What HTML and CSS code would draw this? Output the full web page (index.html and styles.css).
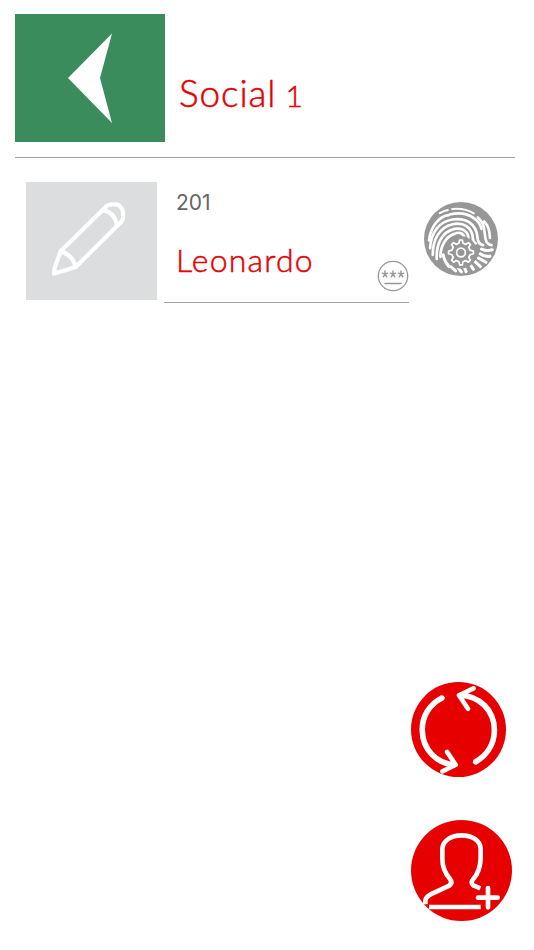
FILE: index.html
```html
<!DOCTYPE html>
<html lang="en">
<head>
    <meta charset="UTF-8">
    <meta name="viewport" content="width=device-width, initial-scale=1.0">
    <title>Social 1</title>
    <link rel="stylesheet" href="styles.css">
</head>
<body>
    <div class="page">
        <!-- Header -->
        <header class="header">
            <a href="#" class="back-btn" aria-label="Back">
                <svg viewBox="0 0 150 128"><path d="M53 64 97 19.500 85 64 97 109Z" fill="#fff"/></svg>
            </a>
            <h1 class="title">Social <span class="title-number">1</span></h1>
        </header>

        <!-- User row -->
        <section class="user-row">
            <a href="#" class="edit-btn" aria-label="Edit">
                <svg viewBox="0 0 393 351" fill="none" stroke="#fff" stroke-width="12.500" stroke-linejoin="round" stroke-linecap="round">
                    <path d="M104 208 242 72Q249 67 260 67H272Q277 68 281 72L287 79Q291 85 291 94V106Q291 113 286 119L149 255 84 275 86 257Z"/>
                    <path d="M104 208Q141 220 149 255M233 85Q266 91 273 130"/>
                </svg>
            </a>
            <div class="user-info">
                <div class="user-text">
                    <div class="user-id">201</div>
                    <div class="user-name">Leonardo</div>
                </div>
                <svg class="pin-icon" viewBox="0 0 32 32" fill="none" stroke="#979797" stroke-linecap="round">
                    <circle cx="16" cy="16" r="14.700" stroke-width="1.300"/>
                    <path stroke-width="1.400" d="M8 11V14M5.300 13.200 8 14 10.700 13.200M6.300 16.800 8 14 9.700 16.800M16 11V14M13.300 13.200 16 14 18.700 13.200M14.300 16.800 16 14 17.700 16.800M24 11V14M21.300 13.200 24 14 26.700 13.200M22.300 16.800 24 14 25.700 16.800"/>
                    <path stroke-width="1.500" d="M8 23.400H24"/>
                </svg>
            </div>
            <svg class="finger-icon" viewBox="28 21 220 220" fill="none" stroke="#fff" stroke-width="8" stroke-linecap="round">
                <circle cx="138" cy="131" r="110" fill="#979797" stroke="none"/>
                <path stroke-width="6" d="M75 54Q86 48 99 45M112 42Q148 38 176 55"/>
                <path d="M43 135C48 90 76 62 102 60M104 58Q149 48 176 69Q195 82 199 101"/>
                <path d="M46 158C49 110 74 79 113 73C153 67 184 86 187 126Q188 146 204 149"/>
                <path d="M54 178C54 132 74 96 113 87C147 80 171 98 173 127Q173 139 182 144"/>
                <path d="M66 190C64 148 80 110 119 101C144 96 161 110 160 132"/>
                <path d="M77 184C76 154 92 123 120 115C136 108 147 117 147 126"/>
                <path d="M188 67Q203 80 206 98L211 131Q214 147 229 149M207 79Q223 94 224 128"/>
                <path stroke-width="9" d="M199 161Q215 168 231 163M195 175Q208 185 224 182M190 188 212 200M180 198 196 213M166 208 175 221M148 215 153 228M130 217 139 229M108 213 122 226M85 178Q88 196 102 213"/>
                <circle cx="138" cy="171" r="48" fill="#979797" stroke="none"/>
                <path stroke-width="5" stroke-linejoin="round" d="M132 143 134 134H142L144 143 152 147 160 142 166 148 161 156 165 164 175 167V175L165 178 161 186 166 194 160 200 152 195 144 199 142 208H134L132 199 124 195 116 200 110 194 115 186 111 178 101 175V167L111 164 115 156 110 148 116 142 124 147Z"/>
                <circle cx="138" cy="171" r="13" stroke-width="5"/>
            </svg>
        </section>

        <!-- Action buttons -->
        <div class="actions">
            <a href="#" class="action-btn" aria-label="Refresh">
                <svg viewBox="34 36 287 287" fill="none" stroke="#fff" stroke-linecap="round" stroke-linejoin="round">
                    <circle cx="177.500" cy="179.500" r="143.500" fill="#e60000" stroke="none"/>
                    <path stroke-width="17" stroke-linecap="butt" d="M130 83C90 103 67 139 68 182C69 239 111 284 168 286M181 76C242 77 286 123 286 181C286 223 264 258 226 279"/>
                    <path stroke-width="14" d="M129 84 124 87M223 55 179 76 206 117M143 247 169 286 129 306M228 278 233 275"/>
                </svg>
            </a>
            <a href="#" class="action-btn action-btn-large" aria-label="Add user">
                <svg viewBox="34 30 303 303" fill="none" stroke="#fff" stroke-width="14" stroke-linejoin="round">
                    <circle cx="185.500" cy="181.500" r="151.500" fill="#e60000" stroke="none"/>
                    <path d="M77 283V271Q78 262 91 254L149 227Q160 218 151 207C134 188 128 169 128 145V116C130 91 155 76 186 76C217 76 242 91 243 116V145C242 170 237 189 221 207Q211 218 221 226L242 235M88 291H243"/>
                    <path stroke-linecap="round" d="M265 234V292M235 263H294"/>
                </svg>
            </a>
        </div>
    </div>
</body>
</html>
```
FILE: styles.css
```css
/* Global Styles */
* { margin: 0; padding: 0; box-sizing: border-box; }
body {
    background-color: #fff;
    font-family: Lato, sans-serif;
    font-weight: 300;
    color: #e60000;
}
svg { display: block; }
.page {
    display: flex;
    flex-direction: column;
    height: 100vh;
    padding: 14px 19px 29px 15px;
}

/* Header */
.header {
    display: flex;
    align-items: flex-end;
    height: 144px;
    padding-bottom: 15px;
    border-bottom: 1px solid #a4a4a4;
}
.back-btn { width: 150px; height: 128px; background-color: #3a8c5c; }
.back-btn svg { width: 150px; height: 128px; }
.title {
    margin-left: 14px;
    padding-bottom: 25px;
    font-size: 37px;
    font-weight: 300;
    line-height: 44px;
    letter-spacing: 0.900px;
    word-spacing: -2px;
    white-space: nowrap;
    -webkit-text-stroke: 0.500px #e60000;
}
.title-number { font-size: 30px; }

/* User row */
.user-row { display: flex; align-items: flex-start; padding: 24px 0 0 11px; }
.edit-btn { width: 131px; height: 118px; background-color: #dcdddf; }
.edit-btn svg { width: 131px; height: 117px; }
.user-info {
    display: flex;
    justify-content: space-between;
    align-items: flex-end;
    width: 245px;
    height: 121px;
    margin-left: 7px;
    padding-bottom: 10px;
    border-bottom: 1px solid #a4a4a4;
}
.user-text { align-self: flex-start; padding: 9px 0 0 12px; }
.user-id { font-family: Inter, sans-serif; font-size: 21px; font-weight: 400; line-height: 24px; color: #666; }
.user-name {
    margin-top: 26px;
    font-size: 32px;
    line-height: 38px;
    letter-spacing: 1.200px;
    -webkit-text-stroke: 0.500px #e60000;
}
.pin-icon { width: 32px; height: 32px; }
.finger-icon { width: 74px; height: 74px; margin: 20px 0 0 15px; }

/* Action buttons */
.actions {
    display: flex;
    flex-direction: column;
    gap: 43px;
    width: 101px;
    margin: auto 3px 0 auto;
}
.action-btn svg { width: 95px; height: 95px; }
.action-btn-large svg { width: 101px; height: 101px; }
```
